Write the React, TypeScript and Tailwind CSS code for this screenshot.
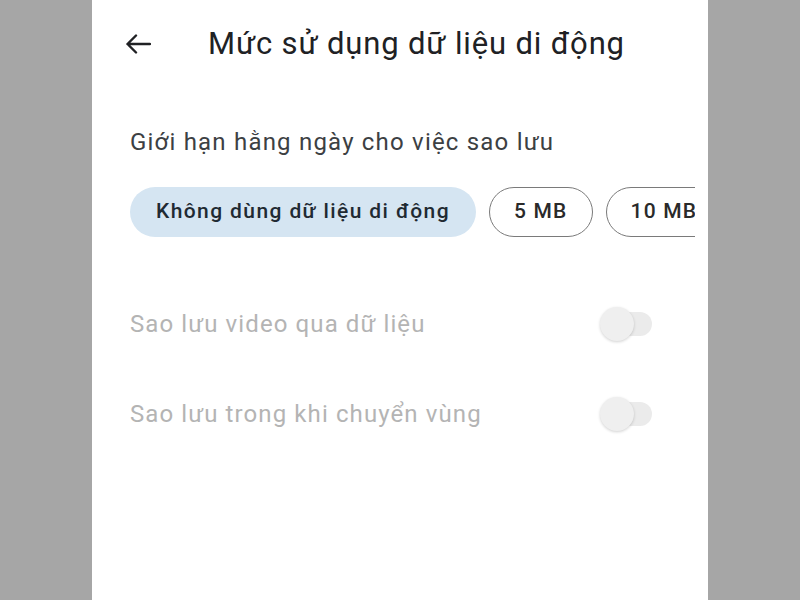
import React from 'react';

const font = { fontFamily: 'Roboto, "Noto Sans", sans-serif' };

const Toggle: React.FC = () => (
  <div className="relative w-[54px] h-[36px] shrink-0">
    <div className="absolute left-[12px] top-[6px] w-[40px] h-[24px] rounded-full bg-[#ebebeb]" />
    <div className="absolute left-0 top-[1px] w-[34px] h-[34px] rounded-full bg-[#efefef] shadow-[0_1px_3px_rgba(0,0,0,0.18)]" />
  </div>
);

const chips = ['Không dùng dữ liệu di động', '5 MB', '10 MB'];

export default function App() {
  return (
    <div className="w-full h-[600px] bg-[#a6a6a6] flex justify-center" style={font}>
      <div className="w-[616px] h-full bg-white flex flex-col">
        {/* Header */}
        <div className="flex items-center h-[88px] pl-[33px]">
          <svg width="26" height="20" viewBox="0 0 26 20" fill="none" className="text-[#202124]">
            <path d="M25 10H2.5M11 1.5L2.5 10L11 18.5" stroke="currentColor" strokeWidth="2.4" strokeLinecap="round" strokeLinejoin="round" />
          </svg>
          <h1 className="ml-[57px] text-[31px] leading-[40px] text-[#202124] tracking-[0.85px]">Mức sử dụng dữ liệu di động</h1>
        </div>

        {/* Daily limit */}
        <div className="pl-[38px] mt-[38px] text-[24px] leading-[32px] text-[#3c4043] tracking-[1.2px]">
          Giới hạn hằng ngày cho việc sao lưu
        </div>
        <div className="mt-[29px] ml-[38px] w-[565px] overflow-hidden">
          <div className="flex gap-[13px] w-max">
            {chips.map((c, i) => (
              <div
                key={c}
                className={
                  i === 0
                    ? 'h-[50px] px-[26px] rounded-full bg-[#d5e5f2] flex items-center text-[21px] font-medium tracking-[1.4px] text-[#1f2a33]'
                    : 'h-[50px] px-[24px] rounded-full border border-[#7a7a7a] flex items-center text-[21px] font-medium tracking-[1.2px] text-[#2a2a2a]'
                }
              >
                {c}
              </div>
            ))}
          </div>
        </div>

        {/* Toggles */}
        <div className="mt-[69px] pl-[38px] pr-[54px] flex items-center justify-between">
          <span className="text-[24px] leading-[36px] tracking-[1.1px] text-[#b4b4b4]">Sao lưu video qua dữ liệu</span>
          <Toggle />
        </div>
        <div className="mt-[54px] pl-[38px] pr-[54px] flex items-center justify-between">
          <span className="text-[24px] leading-[36px] tracking-[1.1px] text-[#b4b4b4]">Sao lưu trong khi chuyển vùng</span>
          <Toggle />
        </div>
      </div>
    </div>
  );
}
